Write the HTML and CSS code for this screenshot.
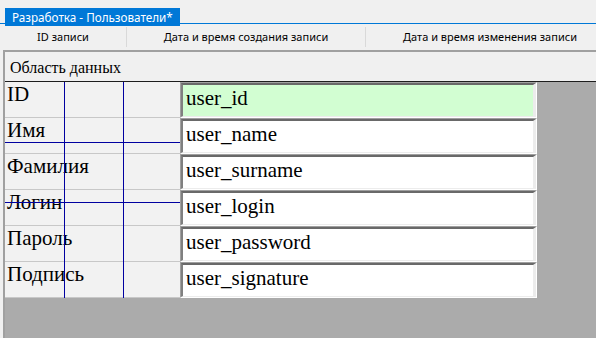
FILE: index.html
```html
<!DOCTYPE html>
<html lang="ru">
<head>
    <meta charset="UTF-8">
    <title>Разработка - Пользователи</title>
    <link rel="stylesheet" href="styles.css">
</head>
<body>
    <div class="tabbar">
        <div class="tab">Разработка - Пользователи*</div>
    </div>
    <div class="columns">
        <div class="col col-id">ID записи</div>
        <div class="col col-created">Дата и время создания записи</div>
        <div class="col col-changed">Дата и время изменения записи</div>
    </div>
    <div class="workspace">
        <div class="area-title">Область данных</div>
        <div class="grid">
            <div class="row">
                <div class="label">ID</div>
                <div class="field"><div class="field-in key">user_id</div></div>
            </div>
            <div class="row">
                <div class="label">Имя</div>
                <div class="field"><div class="field-in">user_name</div></div>
            </div>
            <div class="row">
                <div class="label">Фамилия</div>
                <div class="field"><div class="field-in">user_surname</div></div>
            </div>
            <div class="row">
                <div class="label">Логин</div>
                <div class="field"><div class="field-in">user_login</div></div>
            </div>
            <div class="row">
                <div class="label">Пароль</div>
                <div class="field"><div class="field-in">user_password</div></div>
            </div>
            <div class="row">
                <div class="label">Подпись</div>
                <div class="field"><div class="field-in">user_signature</div></div>
            </div>
            <!-- guide lines of the designer -->
            <div class="guide guide-v guide-v1"></div>
            <div class="guide guide-v guide-v2"></div>
            <div class="guide guide-h guide-h1"></div>
            <div class="guide guide-h guide-h2"></div>
        </div>
    </div>
</body>
</html>
```

FILE: styles.css
```css
html, body {
  height: 100%;
}
body {
  margin: 0;
  background: #f0f0f0;
  font-family: "Noto Sans", "Open Sans", sans-serif;
  overflow: hidden;
  display: flex;
  flex-direction: column;
}

/* tab strip */
.tabbar {
  height: 18px;
  padding: 5px 0 0 5px;
  border-bottom: 1px solid #0078d7;
}
.tab {
  display: inline-block;
  height: 18px;
  line-height: 18px;
  padding: 0 7px;
  background: #0078d7;
  color: #fff;
  font-size: 11.7px;
}

/* column headers */
.columns {
  display: flex;
  height: 26px;
  align-items: center;
  font-size: 11px;
  color: #000;
}
.col {
  flex-shrink: 0;
  height: 20px;
  line-height: 20px;
  text-align: center;
  border-right: 1px solid #d9d9d9;
}
.col-id {
  width: 126px;
}
.col-created {
  width: 238px;
}
.col-changed {
  width: 248px;
  border-right: none;
}

/* form area */
.workspace {
  flex: 1;
  margin-left: 3px;
  border-top: 2px solid #a0a0a0;
  border-left: 2px solid #a0a0a0;
  background: #ababab;
}
.area-title {
  height: 29px;
  padding-left: 5px;
  line-height: 32px;
  background: #f0f0f0;
  border-bottom: 1px solid #1e1e1e;
  font-family: "Liberation Serif", serif;
  font-size: 16px;
}
.grid {
  position: relative;
  width: 532px;
  font-family: "Liberation Serif", serif;
  font-size: 21px;
  color: #000;
}
.row {
  display: flex;
  height: 36px;
}
.label {
  width: 175px;
  box-sizing: border-box;
  padding: 0 0 0 2px;
  background: #f2f2f2;
  border-bottom: 1px solid #c8c8c8;
  line-height: 24px;
}
.field {
  flex: 1;
  display: flex;
  border-top: 1px solid #a0a0a0;
  border-left: 1px solid #a0a0a0;
  border-right: 1px solid #fff;
  border-bottom: 1px solid #fff;
}
.field-in {
  flex: 1;
  padding: 1px 0 0 3px;
  background: #fff;
  border-top: 2px solid #696969;
  border-left: 2px solid #808080;
  border-right: 3px solid #ececec;
  border-bottom: 1px solid #ececec;
  line-height: 24px;
}
.field-in.key {
  background: #d2fed2;
}

/* blue guides over the labels */
.guide {
  position: absolute;
  background: #0000a0;
}
.guide-v {
  top: 0;
  width: 1px;
  height: 216px;
}
.guide-v1 {
  left: 59px;
}
.guide-v2 {
  left: 118px;
}
.guide-h {
  left: 0;
  width: 175px;
  height: 1px;
}
.guide-h1 {
  top: 60px;
}
.guide-h2 {
  top: 120px;
}
```
